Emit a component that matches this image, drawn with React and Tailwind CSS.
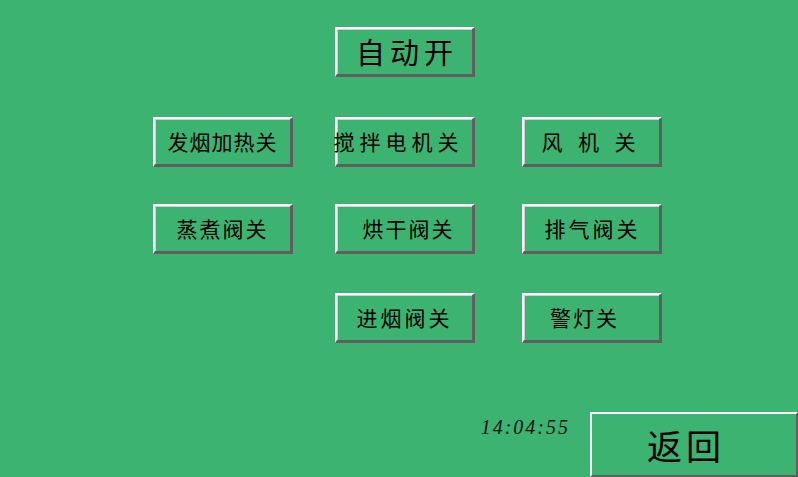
const Btn = ({ label, className = "", textClass = "" }) => (
  <div
    className={`flex h-[50px] w-[140px] items-center justify-center border-t-2 border-l-2 border-b-[3px] border-r-[3px] border-t-white border-l-white border-b-[#5f5f5f] border-r-[#5f5f5f] shadow-[inset_1px_1px_0_#cfcfcf] ${className}`}
  >
    <span className={`whitespace-pre text-[21px] leading-none text-black ${textClass}`}>{label}</span>
  </div>
);

export default function App() {
  return (
    <div
      className="flex h-[477px] w-[798px] flex-col overflow-hidden bg-[#3cb371]"
      style={{ fontFamily: '"Noto Sans CJK SC", "Noto Sans", sans-serif' }}
    >
      <div className="mt-[27px] flex pl-[335px]">
        <Btn label="自动开" textClass="text-[29px] tracking-[5px] pl-[5px]" />
      </div>

      <div className="mt-[40px] flex pl-[153px]">
        <Btn label="发烟加热关" textClass="tracking-[1px]" />
        <Btn label="搅拌电机关" className="ml-[42px]" textClass="tracking-[5px] pr-[12px]" />
        <Btn label="风  机  关" className="ml-[47px]" textClass="tracking-[2px] pr-[4px]" />
      </div>

      <div className="mt-[37px] flex pl-[153px]">
        <Btn label="蒸煮阀关" textClass="tracking-[2px]" />
        <Btn label="烘干阀关" className="ml-[42px]" textClass="tracking-[2px] pl-[8px]" />
        <Btn label="排气阀关" className="ml-[47px]" textClass="tracking-[3px] pl-[2px]" />
      </div>

      <div className="mt-[39px] flex pl-[335px]">
        <Btn label="进烟阀关" textClass="tracking-[3px]" />
        <Btn label="警灯关" className="ml-[47px]" textClass="tracking-[2px] pr-[14px]" />
      </div>

      <div className="mt-auto flex items-start justify-end">
        <span
          className="mt-[5px] mr-[20px] text-[20px] italic leading-none tracking-[2px] text-[#111]"
          style={{ fontFamily: '"Liberation Serif", serif' }}
        >
          14:04:55
        </span>
        <div className="flex h-[65px] w-[208px] items-center justify-center border-t-2 border-l-2 border-b-2 border-r-2 border-t-white border-l-white border-b-[#5f5f5f] border-r-[#5f5f5f]">
          <span className="pr-[16px] text-[35px] leading-none tracking-[4px] text-black">返回</span>
        </div>
      </div>
    </div>
  );
}
